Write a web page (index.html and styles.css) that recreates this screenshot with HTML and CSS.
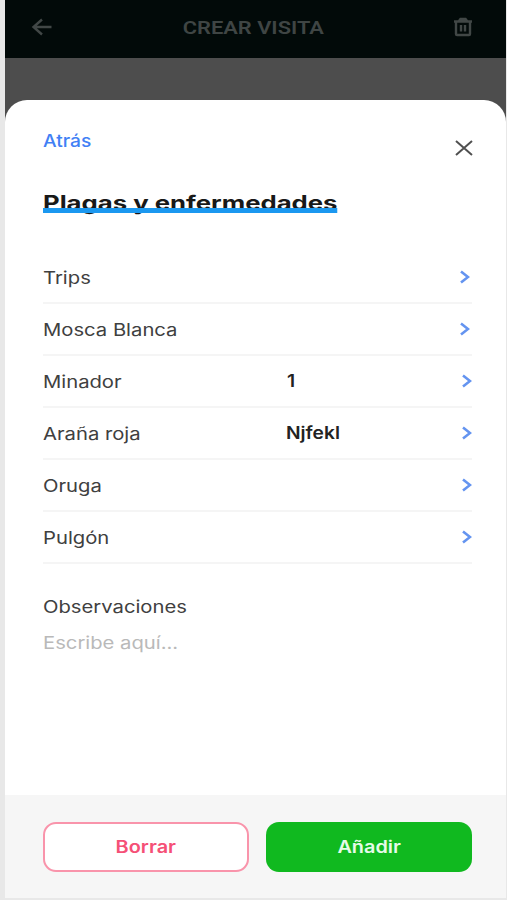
FILE: index.html
```html
<!DOCTYPE html>
<html lang="es">
<head>
    <meta charset="UTF-8">
    <meta name="viewport" content="width=device-width, initial-scale=1.0">
    <title>Crear visita</title>
    <link rel="stylesheet" href="styles.css">
</head>
<body>
    <div class="screen">
        <!-- cabecera -->
        <header class="header">
            <svg class="icon_back" width="22" height="18" viewBox="0 0 22 18">
                <path d="M20.500 9H2.500M11 1.500L2.500 9l8.500 7.500"/>
            </svg>
            <h1 class="header_title">CREAR VISITA</h1>
            <svg class="icon_trash" width="20" height="20" viewBox="0 0 20 20">
                <path d="M1 4.500h18M6 4l1.500-2h5L14 4M3 4.500V17q0 1 1 1h12q1 0 1-1V4.500M8 8v6.500M12 8v6.500"/>
            </svg>
        </header>

        <!-- modal -->
        <main class="modal">
            <div class="modal_top">
                <a class="back" href="#">Atrás</a>
                <svg class="icon_close" width="18" height="16" viewBox="0 0 18 16">
                    <path d="M1 1l16 14M17 1L1 15"/>
                </svg>
            </div>
            <h2 class="title"><span class="title_text">Plagas y enfermedades</span></h2>

            <ul class="list">
                <li class="row">
                    <span class="name">Trips</span>
                    <span class="value"></span>
                    <svg class="arrow" width="10" height="14" viewBox="0 0 10 14"><path d="M1 1.500L8 7l-7 5.500"/></svg>
                </li>
                <li class="row">
                    <span class="name">Mosca Blanca</span>
                    <span class="value"></span>
                    <svg class="arrow" width="10" height="14" viewBox="0 0 10 14"><path d="M1 1.500L8 7l-7 5.500"/></svg>
                </li>
                <li class="row">
                    <span class="name">Minador</span>
                    <span class="value value_number">1</span>
                    <svg class="arrow arrow_end" width="10" height="14" viewBox="0 0 10 14"><path d="M1 1.500L8 7l-7 5.500"/></svg>
                </li>
                <li class="row">
                    <span class="name">Araña roja</span>
                    <span class="value">Njfekl</span>
                    <svg class="arrow arrow_end" width="10" height="14" viewBox="0 0 10 14"><path d="M1 1.500L8 7l-7 5.500"/></svg>
                </li>
                <li class="row">
                    <span class="name">Oruga</span>
                    <span class="value"></span>
                    <svg class="arrow arrow_end" width="10" height="14" viewBox="0 0 10 14"><path d="M1 1.500L8 7l-7 5.500"/></svg>
                </li>
                <li class="row">
                    <span class="name">Pulgón</span>
                    <span class="value"></span>
                    <svg class="arrow arrow_end" width="10" height="14" viewBox="0 0 10 14"><path d="M1 1.500L8 7l-7 5.500"/></svg>
                </li>
            </ul>

            <div class="notes">
                <span class="notes_label">Observaciones</span>
                <span class="notes_text">Escribe aquí...</span>
            </div>

            <!-- botones -->
            <footer class="footer">
                <button class="btn btn_delete"><span class="btn_text">Borrar</span></button>
                <button class="btn btn_add"><span class="btn_text">Añadir</span></button>
            </footer>
        </main>
    </div>
</body>
</html>
```

FILE: styles.css
```css
*{
    box-sizing: border-box;
    margin: 0;
    padding: 0;
}
body{
    height: 900px;
    background: #e8e8e8;
    font-family: Inter, "Liberation Sans", sans-serif;
    overflow: hidden;
}
svg{
    fill: none;
    flex-shrink: 0;
}
.screen{
    display: flex;
    flex-direction: column;
    width: 501px;
    height: 898px;
    margin-left: 5px;
    background: #4d4d4d;
}

/* cabecera */
.header{
    display: flex;
    align-items: center;
    justify-content: space-between;
    height: 58px;
    padding: 0 33px 4px 26px;
    background: #020a09;
}
.header_title{
    color: #3f4544;
    font-family: Roboto, sans-serif;
    font-size: 19px;
    font-weight: 600;
    transform: scaleX(1.15);
}
.icon_back,
.icon_trash{
    stroke: #414746;
    stroke-width: 2.4;
}

/* modal */
.modal{
    display: flex;
    flex-direction: column;
    flex: 1;
    margin-top: 42px;
    background: #fff;
    border-radius: 22px 22px 0 0;
    overflow: hidden;
}
.modal_top{
    display: flex;
    justify-content: space-between;
    padding: 29px 33px 0 38px;
}
.back{
    color: #4180f5;
    font-size: 17px;
    font-weight: 500;
    line-height: 24px;
    text-decoration: none;
    transform: scaleX(1.13);
    transform-origin: left;
}
.icon_close{
    margin-top: 11px;
    stroke: #505050;
    stroke-width: 2;
}
.title{
    display: flex;
    margin: 32px 0 0 38px;
    height: 30px;
}
/* la línea azul va por encima del texto */
.title_text{
    position: relative;
    color: #181818;
    font-size: 20px;
    font-weight: 700;
    line-height: 30px;
    transform: scaleX(1.285);
    transform-origin: left;
}
.title_text::after{
    content: '';
    position: absolute;
    left: 0;
    right: 0;
    bottom: 5px;
    height: 5px;
    background: #1b98f0;
}
.list{
    list-style: none;
    margin: 34px 34px 0 38px;
}
.row{
    display: grid;
    grid-template-columns: 243px 1fr 12px;
    align-items: center;
    height: 52px;
    border-bottom: 2px solid #f5f5f5;
}
.name,
.notes_label,
.notes_text{
    justify-self: start;
    color: #404040;
    font-size: 17px;
    transform: scaleX(1.19);
    transform-origin: left;
}
.name{
    padding-top: 2px;
    line-height: 48px;
}
.value{
    justify-self: start;
    color: #222;
    font-size: 17px;
    font-weight: 600;
    transform: scaleX(1.13);
    transform-origin: left;
}
.value_number{
    margin-left: 1px;
}
.arrow{
    stroke: #6494f0;
    stroke-width: 2.6;
}
.arrow_end{
    margin-left: 2px;
}

/* observaciones */
.notes{
    display: flex;
    flex-direction: column;
    align-items: flex-start;
    margin: 25px 0 0 38px;
}
.notes_label,
.notes_text{
    line-height: 36px;
}
.notes_text{
    color: #b9b9b9;
}

/* botones */
.footer{
    display: grid;
    grid-template-columns: 1fr 1fr;
    gap: 17px;
    height: 103px;
    margin-top: auto;
    padding: 27px 34px 0 38px;
    background: #f6f6f6;
}
.btn{
    height: 50px;
    border: 0;
    border-radius: 13px;
    font-family: inherit;
    font-size: 17px;
    font-weight: 600;
}
.btn_text{
    display: inline-block;
    transform: scaleX(1.17);
}
.btn_delete{
    color: #f55076;
    background: #fff;
    border: 2px solid #f994ab;
}
.btn_add{
    color: #e6fbe8;
    background: #10b91f;
}
```
